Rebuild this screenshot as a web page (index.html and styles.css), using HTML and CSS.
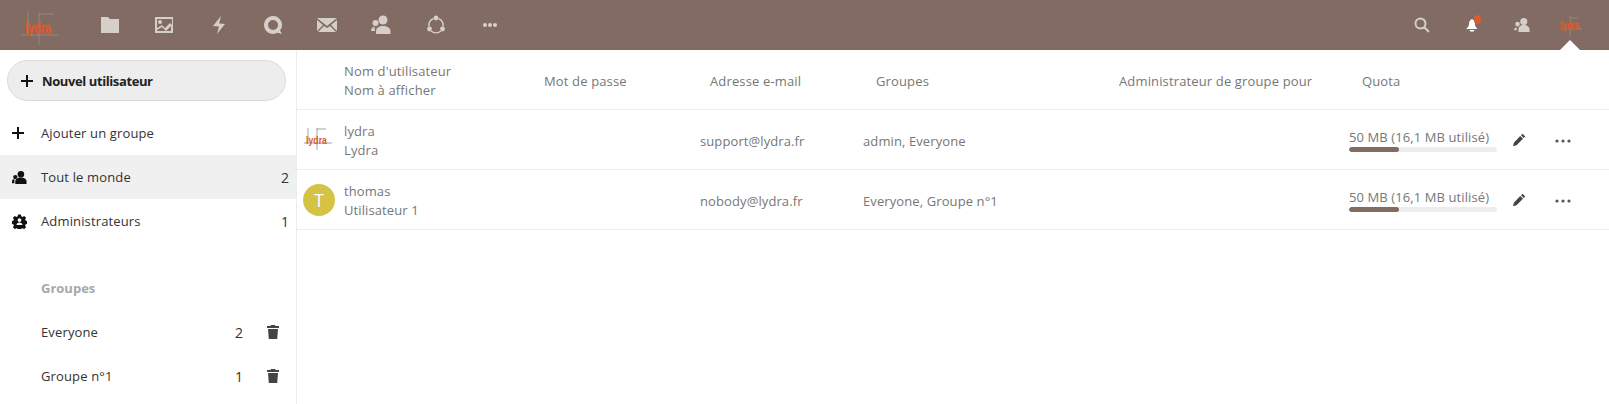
FILE: index.html
```html
<!DOCTYPE html>
<html lang="fr">
<head>
<meta charset="utf-8">
<title>Utilisateurs</title>
<link rel="stylesheet" href="styles.css">
</head>
<body>
<header class="topbar">
  <div class="topbar-left">
    <svg class="logo" viewBox="0 0 44 44" width="44" height="44">
      <path stroke="#a3938a" stroke-width=".7" fill="none" d="M5 32H42M23 10V42M23 11H38M12 8V32"/>
      <text class="logo-text" x="9" y="30" textLength="26" lengthAdjust="spacingAndGlyphs">lydra</text>
    </svg>
    <nav class="apps">
      <svg class="app" viewBox="0 0 20 20"><path d="M1 2h7l2 2h9v14H1z"/></svg>
      <svg class="app" viewBox="0 0 20 20"><path fill-rule="evenodd" d="M1 2h18v16H1zM3 4v9l5-3 3 3 5-5 2 2V4zM6 5a2 2 0 1 1 0 4 2 2 0 0 1 0-4zM3 15v1h14v-5l-5 5-4-4z"/></svg>
      <svg class="app" viewBox="0 0 20 20"><path d="M12 1 4 11l6 .5-2 7.500 8-10-6-.5z"/></svg>
      <svg class="app" viewBox="0 0 20 20"><path fill-rule="evenodd" d="M10 1a9 9 0 0 1 7 14.600L19 19l-4.500-1.200A9 9 0 1 1 10 1zm0 4a5 5 0 1 0 0 10 5 5 0 0 0 0-10z"/></svg>
      <svg class="app" viewBox="0 0 20 14"><path d="M0 0h20L10 8zM0 2l6 5-6 6zM20 2v11l-6-6zM7 8l3 2 3-2 6 6H1z"/></svg>
      <svg class="app" viewBox="0 0 20 20"><circle cx="12" cy="5" r="4.500"/><path d="M5 19v-3c0-3 3-5 7-5s7.500 2 7.500 5v3z"/><circle cx="4.500" cy="8" r="3"/><path d="M0 16c0-2 1-4 3.500-4.500L4 16z"/></svg>
      <svg class="app" viewBox="0 0 20 20"><path class="ring" d="M12.500 3.500a7.500 7.500 0 0 1 4.500 8M15 16a7.500 7.500 0 0 1-10 0M3 11.500a7.500 7.500 0 0 1 4.500-8"/><circle cx="10" cy="3" r="2.400"/><circle cx="3.500" cy="14" r="2.400"/><circle cx="16.500" cy="14" r="2.400"/></svg>
      <svg class="app" viewBox="0 0 20 20"><circle cx="5" cy="10" r="2"/><circle cx="10" cy="10" r="2"/><circle cx="15" cy="10" r="2"/></svg>
    </nav>
  </div>
  <div class="topbar-right">
    <svg class="tool" viewBox="0 0 16 16"><path class="ring-bold" d="M6.500 1.500a5 5 0 1 1 0 10 5 5 0 0 1 0-10zM10 10l5 5"/></svg>
    <span class="bell">
      <svg class="tool" viewBox="0 0 16 16"><path class="white" d="M8 2C5.700 3 5 5 5 7c0 2-1 3-3 5h11.500C12 10.500 11 9 11 7c0-2-.7-4-3-5zM5.500 13h5a2.500 1.800 0 0 1-5 0z"/></svg>
      <i class="dot"></i>
    </span>
    <svg class="tool" viewBox="0 0 18 16"><circle cx="11" cy="4" r="4"/><path d="M5 16v-3c0-3 2.500-5 6-5s6.500 2 6.500 5v3z"/><circle cx="4" cy="7" r="2.600"/><path d="M0 14c0-2 1-3 3-3.500V14z"/></svg>
    <span class="me">
      <svg viewBox="0 0 26 26" width="26" height="26">
        <path stroke="#a3938a" stroke-width=".6" fill="none" d="M3 17H25M13 3V25M13 6H22"/>
        <text class="me-text" x="3" y="17" textLength="19" lengthAdjust="spacingAndGlyphs">lydra</text>
      </svg>
    </span>
  </div>
</header>
<div class="layout">
  <aside class="sidebar">
    <button class="new-user">
      <svg class="plus" viewBox="0 0 12 12"><path d="M5 0h2v5h5v2H7v5H5V7H0V5h5z"/></svg>
      Nouvel utilisateur
    </button>
    <ul class="menu">
      <li class="item">
        <span class="ico-box"><svg class="plus plus-flat" viewBox="0 0 12 12"><path d="M5 0h2v5h5v2H7v5H5V7H0V5h5z"/></svg></span>
        <span class="label">Ajouter un groupe</span>
      </li>
      <li class="item active">
        <span class="ico-box"><svg class="ico" viewBox="0 0 16 14"><circle cx="9.500" cy="3.500" r="3.500"/><path d="M3.500 14v-3C3.500 8.500 6.500 7 9.500 7s6 1.500 6 4v3z"/><circle cx="3.500" cy="6.500" r="2.300"/><path d="M0 13v-2c0-1.500 1-2.500 2.500-2.500V13z"/></svg></span>
        <span class="label">Tout le monde</span><span class="count">2</span>
      </li>
      <li class="item">
        <span class="ico-box"><svg class="ico" viewBox="0 0 16 16"><path fill-rule="evenodd" d="M6.500.5h3l.4 2 1.300.6 1.800-1 2 2-1 1.800.6 1.300 2 .4v3l-2 .4-.6 1.300 1 1.800-2 2-1.800-1-1.300.6-.4 2h-3l-.4-2-1.300-.6-1.800 1-2-2 1-1.800-.6-1.300-2-.4v-3l2-.4.6-1.300-1-1.800 2-2 1.800 1 1.300-.6zM8 4.500a2 2 0 1 0 0 4 2 2 0 0 0 0-4zM4.800 11.800h6.400c0-1.800-1.400-2.800-3.200-2.800s-3.200 1-3.200 2.800z"/></svg></span>
        <span class="label">Administrateurs</span><span class="count">1</span>
      </li>
    </ul>
    <div class="caption">Groupes</div>
    <ul class="menu">
      <li class="item group">
        <span class="ico-box"></span><span class="label">Everyone</span><span class="count">2</span>
        <svg class="trash" viewBox="0 0 12 14"><path d="M4 0h4l.5 1H12v2H0V1h3.500zM1 4h10l-.8 10H1.800z"/></svg>
      </li>
      <li class="item group">
        <span class="ico-box"></span><span class="label">Groupe n°1</span><span class="count">1</span>
        <svg class="trash" viewBox="0 0 12 14"><path d="M4 0h4l.5 1H12v2H0V1h3.500zM1 4h10l-.8 10H1.800z"/></svg>
      </li>
    </ul>
  </aside>
  <main class="content">
    <div class="thead">
      <div class="names"><div>Nom d'utilisateur</div><div>Nom à afficher</div></div>
      <div class="cell-low">Mot de passe</div>
      <div class="cell-low">Adresse e-mail</div>
      <div class="cell-low">Groupes</div>
      <div class="cell-low">Administrateur de groupe pour</div>
      <div class="cell-low">Quota</div>
    </div>
    <div class="row">
      <svg class="avatar" viewBox="0 0 32 32">
        <path stroke="#8c8c8c" stroke-width=".8" fill="none" d="M1 19H29M14 4V26M14 5H23M5 4V19"/>
        <text class="avatar-text" x="3" y="20" textLength="21" lengthAdjust="spacingAndGlyphs">lydra</text>
      </svg>
      <div class="names"><div>lydra</div><div>Lydra</div></div>
      <div class="cell-low">support@lydra.fr</div>
      <div class="cell-low">admin, Everyone</div>
      <div class="quota">
        <div>50 MB (16,1 MB utilisé)</div>
        <div class="bar"><div class="fill" style="width:34%"></div></div>
      </div>
      <svg class="pencil" viewBox="0 0 14 14"><path d="M10.500.8l2.700 2.700-1.500 1.500L9 2.300zM8.200 3l2.800 2.800-6.500 6.500-3.500 1 .9-3.600z"/></svg>
      <svg class="more" viewBox="0 0 16 4"><circle cx="2" cy="2" r="1.600"/><circle cx="8" cy="2" r="1.600"/><circle cx="14" cy="2" r="1.600"/></svg>
    </div>
    <div class="row">
      <div class="avatar letter">T</div>
      <div class="names"><div>thomas</div><div>Utilisateur 1</div></div>
      <div class="cell-low">nobody@lydra.fr</div>
      <div class="cell-low">Everyone, Groupe n°1</div>
      <div class="quota">
        <div>50 MB (16,1 MB utilisé)</div>
        <div class="bar"><div class="fill" style="width:34%"></div></div>
      </div>
      <svg class="pencil" viewBox="0 0 14 14"><path d="M10.500.8l2.700 2.700-1.500 1.500L9 2.300zM8.200 3l2.800 2.800-6.500 6.500-3.500 1 .9-3.600z"/></svg>
      <svg class="more" viewBox="0 0 16 4"><circle cx="2" cy="2" r="1.600"/><circle cx="8" cy="2" r="1.600"/><circle cx="14" cy="2" r="1.600"/></svg>
    </div>
  </main>
</div>
</body>
</html>
```
FILE: styles.css
```css
* { box-sizing: border-box; }
html, body { margin: 0; height: 100%; overflow: hidden; }
body { font-family: "Open Sans", "Noto Sans", sans-serif; font-size: 13px; color: #222; background: #fff; }
ul { list-style: none; margin: 0; padding: 0; }

.topbar { height: 50px; background: #816b63; display: flex; justify-content: space-between; align-items: center; padding: 0 26px 0 16px; }
.topbar-left { display: flex; align-items: center; }
.logo { display: block; }
.logo-text { font: 700 15px "Liberation Sans", sans-serif; fill: #e0582a; stroke: #e0582a; stroke-width: .5px; }
.me-text { font: 700 10px "Liberation Sans", sans-serif; fill: #d95b2c; stroke: #d95b2c; stroke-width: .6px; }
.avatar-text { font: 700 11px "Liberation Sans", sans-serif; fill: #d95b2c; }
.apps { display: flex; align-items: center; margin-left: 40px; gap: 34.300px; }
.app { width: 20px; height: 20px; fill: #d6cec9; display: block; }
.ring { fill: none; stroke: #d6cec9; stroke-width: 1.400; }
.topbar-right { display: flex; align-items: center; gap: 34px; }
.tool { width: 16px; height: 16px; fill: #d6cec9; display: block; }
.ring-bold { fill: none; stroke: #d6cec9; stroke-width: 2; }
.white { fill: #fff; }
.bell { position: relative; display: block; }
.dot { position: absolute; right: -1px; top: -2px; width: 7px; height: 9px; border-radius: 50%; background: #dc5a2c; }
.me { display: block; width: 26px; height: 26px; position: relative; margin-left: -7px; }
.me::after { content: ""; position: absolute; left: 3px; bottom: -12px; border: 10px solid transparent; border-top: 0; border-bottom-color: #fff; }

.layout { display: flex; height: 354px; }
.sidebar { width: 297px; flex: none; border-right: 1px solid #ededed; padding-top: 10px; }
.new-user { display: flex; align-items: center; width: 279px; height: 41px; margin: 0 0 10px 7px; padding: 0 0 0 13px; border: 1px solid #dbdbdb; border-radius: 21px; background: #ededed; font: 700 13px "Open Sans", sans-serif; letter-spacing: -.4px; color: #222; }
.plus { width: 12px; height: 12px; fill: #111; margin-right: 9px; display: block; }
.plus-flat { margin-right: 0; }
.item { display: flex; align-items: center; height: 44px; padding-left: 12px; padding-right: 7px; }
.item.active { background: #f0f0f0; }
.ico-box { width: 29px; flex: none; }
.ico { width: 15px; height: 15px; fill: #111; display: block; }
.label { flex: 1; font-size: 13px; letter-spacing: .14px; color: #333; }
.count { font-size: 14px; color: #333; }
.caption { margin: 23px 0 0 41px; height: 44px; line-height: 44px; font-weight: 700; color: #a8a8a8; }
.group { padding-right: 17px; }
.group .count { margin-right: 24px; }
.trash { width: 12px; height: 14px; fill: #444; }

.content { flex: 1; min-width: 0; }
.thead { height: 60px; display: grid; grid-template-columns: 200px 166px 166px 243px 243px 1fr; padding: 2px 0 0 47px; align-items: center; color: #777; border-bottom: 1px solid #ededed; line-height: 19px; letter-spacing: .14px; }
.row { height: 60px; display: grid; grid-template-columns: 32px 365px 163px 486px 160px 28px 1fr; padding: 2px 0 0 6px; align-items: center; color: #777; border-bottom: 1px solid #ededed; line-height: 19px; letter-spacing: .1px; }
.cell-low { padding-top: 2px; }
.row .names { padding-left: 9px; }
.avatar { width: 32px; height: 32px; display: block; margin-top: -2px; }
.letter { border-radius: 50%; background: #d4c345; color: #fff; font-size: 18px; line-height: 32px; text-align: center; }
.quota { line-height: 16px; }
.bar { width: 148px; height: 5px; border-radius: 3px; background: #ededed; margin-top: 2px; overflow: hidden; }
.fill { height: 100%; border-radius: 3px; background: #816b63; }
.pencil { width: 14px; height: 14px; fill: #444; margin: -2px 0 0 3px; }
.more { width: 16px; height: 4px; fill: #555; margin-left: 18px; }
```
